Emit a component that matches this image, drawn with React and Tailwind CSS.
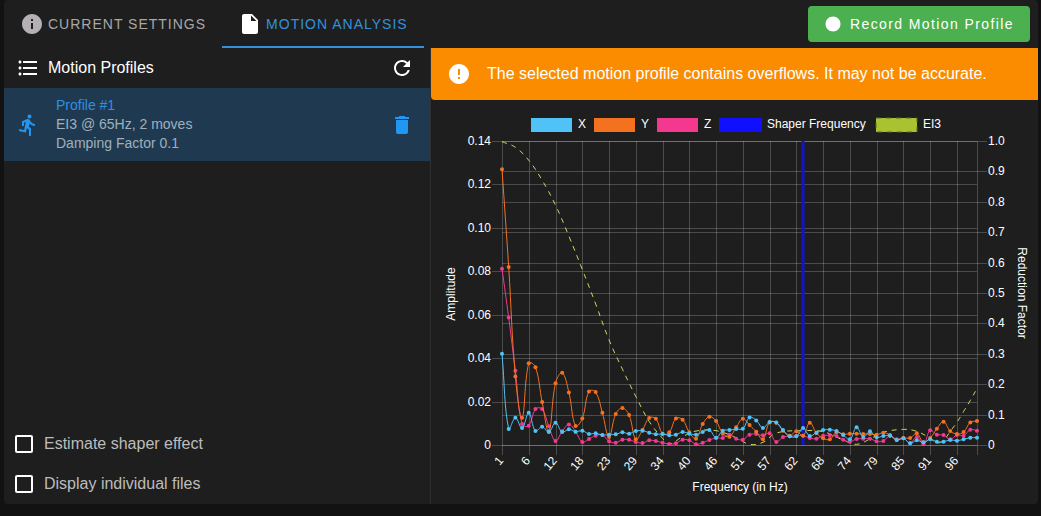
import { useState } from "react";
import { MdInfo, MdInsertDriveFile, MdFormatListBulleted, MdRefresh, MdDirectionsRun, MdDelete, MdError, MdCircle } from "react-icons/md";

// plot area inside the chart's viewBox
const PLOT = { left: 71, top: 41, width: 475, height: 304 };
const RIGHT = PLOT.left + PLOT.width;
const BOTTOM = PLOT.top + PLOT.height;
const FULL_SCALE = 914;   // raw samples at an amplitude of 0.14
const LAST = 71;

const SERIES = [
  { name:"X", color:"#4fc3f7", data:[274,48,82,51,97,42,55,39,67,39,47,40,43,33,35,30,31,32,38,34,42,43,37,32,33,29,31,39,34,31,39,45,22,43,45,48,49,83,74,51,69,68,45,26,26,51,27,37,45,46,42,30,17,53,24,41,23,27,28,15,20,5,14,8,17,10,10,15,13,17,22,22] },
  { name:"Y", color:"#f4711f", data:[829,535,206,82,246,234,129,41,186,217,158,57,80,161,159,97,24,93,111,90,17,45,81,79,34,38,80,76,38,19,63,85,72,34,25,53,79,60,40,17,68,67,43,28,41,28,67,36,20,17,38,32,34,34,33,33,31,37,30,15,21,21,35,8,21,49,70,42,33,39,68,72] },
  { name:"Z", color:"#f5388f", data:[530,383,223,63,58,108,108,56,12,41,62,40,9,18,28,30,11,7,16,16,9,6,14,12,7,3,5,16,14,2,7,15,21,21,31,19,16,31,33,29,35,9,24,26,28,28,21,19,28,29,27,16,10,18,19,19,11,12,28,17,20,6,24,2,44,31,30,17,30,28,46,43] },
];

const EI3 = [[0,912],[2,895],[4,856],[6,796],[8,721],[10,628],[12,528],[14,424],[16,316],[18,228],[20,146],[22,71],[24,20],[25,3],[27,25],[29,42],[32,43],[35,22],[37,2],[39,8],[41,36],[45,43],[48,40],[51,15],[53,2],[55,18],[57,38],[60,47],[62,41],[64,20],[65,6],[66,14],[67,41],[68,68],[69,101],[70,134],[71,170]];

const X_LABELS = [1,6,12,18,23,29,34,40,46,51,57,62,68,74,79,85,91,96];
const AMPLITUDE = ["0","0.02","0.04","0.06","0.08","0.10","0.12","0.14"];
const REDUCTION = ["0","0.1","0.2","0.3","0.4","0.5","0.6","0.7","0.8","0.9","1.0"];

const LEGEND = [
  { name:"X", color:"#4fc3f7", x:100, text:147 },
  { name:"Y", color:"#f4711f", x:163, text:210 },
  { name:"Z", color:"#f5388f", x:226, text:273 },
  { name:"Shaper Frequency", color:"#1010ff", x:288, text:336 },
  { name:"EI3", color:"#a9c22f", x:445, text:492 },
];

const px = i => PLOT.left + (i / LAST) * PLOT.width;
const py = v => BOTTOM - (v / FULL_SCALE) * PLOT.height;
const clampY = y => Math.min(BOTTOM, Math.max(PLOT.top, y));

// bezier curve through the points, tension 0.4
function curve(pts) {
  const ctrl = pts.map((p, i) => {
    const a = pts[i - 1] || p;
    const b = pts[i + 1] || p;
    const da = Math.hypot(p[0] - a[0], p[1] - a[1]);
    const db = Math.hypot(b[0] - p[0], b[1] - p[1]);
    const fa = (0.4 * da) / (da + db);
    const fb = (0.4 * db) / (da + db);
    return {
      prev: [p[0] - fa * (b[0] - a[0]), clampY(p[1] - fa * (b[1] - a[1]))],
      next: [p[0] + fb * (b[0] - a[0]), clampY(p[1] + fb * (b[1] - a[1]))],
    };
  });
  return pts.map((p, i) => (i === 0 ? `M${p}` : `C${ctrl[i - 1].next} ${ctrl[i].prev} ${p}`)).join(" ");
}

function MotionChart() {
  const shaperX = px(45);
  return (
    <svg viewBox="0 0 607 404" className="block w-full h-auto text-[12px]" fill="#fff" role="img" aria-label="Motion profile chart">
      {/* Legend */}
      {LEGEND.map(l => (
        <g key={l.name}>
          <rect x={l.x} y="18" width={l.name === "Shaper Frequency" ? 43 : 41} height="14" fill={l.color} />
          {l.name === "EI3" && <rect x={l.x} y="18" width="41" height="14" fill="none" stroke="#5f6b29" strokeDasharray="5 5" />}
          <text x={l.text} y="28">{l.name}</text>
        </g>
      ))}

      {/* Grid */}
      <g stroke="#fff" strokeOpacity="0.2">
        {X_LABELS.map((l, i) => <path key={l} d={`M${Math.round(px(i * 4)) + 0.5} ${PLOT.top}V${BOTTOM + 10}`} />)}
        <path d={`M${RIGHT + 0.5} ${PLOT.top}V${BOTTOM + 10}`} />
        {AMPLITUDE.map((l, i) => <path key={l} d={`M${PLOT.left - 10} ${Math.round(BOTTOM - (i / 7) * PLOT.height) + 0.5}H${RIGHT}`} />)}
        {REDUCTION.map((l, i) => <path key={l} d={`M${PLOT.left} ${Math.round(BOTTOM - (i / 10) * PLOT.height) + 0.5}H${RIGHT + 10}`} />)}
      </g>

      {/* Axis labels */}
      {AMPLITUDE.map((l, i) => <text key={l} x="60" y={BOTTOM + 4 - (i / 7) * PLOT.height} textAnchor="end">{l}</text>)}
      {REDUCTION.map((l, i) => <text key={l} x="557" y={BOTTOM + 4 - (i / 10) * PLOT.height}>{l}</text>)}
      {X_LABELS.map((l, i) => (
        <text key={l} textAnchor="end" transform={`translate(${px(i * 4) + 2} ${BOTTOM + 16}) rotate(-50)`}>{l}</text>
      ))}
      <text x="309" y="391" textAnchor="middle">Frequency (in Hz)</text>
      <text textAnchor="middle" transform="translate(24 194) rotate(-90)">Amplitude</text>
      <text textAnchor="middle" transform="translate(587 193) rotate(90)">Reduction Factor</text>

      {/* Curves, the first series on top */}
      <path d={curve(EI3.map(([i, v]) => [px(i), py(v)]))} fill="none" stroke="#c8d85c" strokeDasharray="5 5" />
      <path d={`M${shaperX} ${PLOT.top}V${BOTTOM}`} stroke="#1414c8" strokeWidth="3" />
      {[...SERIES].reverse().map(s => (
        <g key={s.name} fill={s.color}>
          <path d={curve(s.data.map((v, i) => [px(i), py(v)]))} fill="none" stroke={s.color} />
          {s.data.map((v, i) => <circle key={i} cx={px(i)} cy={py(v)} r="2" />)}
        </g>
      ))}
    </svg>
  );
}

function Option({ label, checked, onChange }) {
  return (
    <label className="flex items-center gap-[11px] h-10 text-base text-[#bcbcbc] cursor-pointer">
      <input type="checkbox" checked={checked} onChange={onChange}
        className="appearance-none w-[18px] h-[18px] border-2 border-white rounded-xs checked:bg-[#2196f3]" />
      {label}
    </label>
  );
}

export default function App() {
  const [estimate, setEstimate] = useState(false);
  const [individual, setIndividual] = useState(false);

  const tab = "flex items-center gap-1 px-4 h-12 text-sm tracking-[1px] border-b-2";

  return (
    <div className="min-h-screen bg-[#121212] pl-1 pr-[3px] text-white font-['Liberation_Sans',Arial,sans-serif]">
      <div className="bg-[#1e1e1e] rounded">

        {/* Tabs */}
        <header className="flex items-center h-12">
          <nav className="flex">
            <button className={`${tab} pt-px text-[#a8a8a8] border-transparent`}>
              <MdInfo className="w-6 h-6 text-[#b5b0b3]" />CURRENT SETTINGS
            </button>
            <button className={`${tab} pt-px text-[#3391dd] border-[#3391dd]`}>
              <MdInsertDriveFile className="w-6 h-6 text-white" />MOTION ANALYSIS
            </button>
          </nav>
          <button className="flex items-center gap-2 ml-auto mr-2 px-4 h-9 rounded bg-[#4caf50] text-sm tracking-widest">
            <MdCircle className="w-[18px] h-[18px]" />Record Motion Profile
          </button>
        </header>

        <div className="flex">
          {/* Profile list */}
          <section className="flex flex-col shrink-0 w-[427px] border-r border-[#2f2f2f]">
            <div className="flex items-center h-10 pl-3 pr-4">
              <MdFormatListBulleted className="w-6 h-6 mr-2" />
              <h2 className="text-base">Motion Profiles</h2>
              <button aria-label="Refresh" className="ml-auto"><MdRefresh className="w-6 h-6" /></button>
            </div>
            <div className="flex items-center py-2 pl-3 pr-4 bg-[#1f3a50]">
              <MdDirectionsRun className="w-6 h-6 mr-4 text-[#2196f3]" />
              <div className="text-sm leading-[19px] text-[#9fb0bd]">
                <p className="text-[#2f8fe0]">Profile #1</p>
                <p>EI3 @ 65Hz, 2 moves</p>
                <p>Damping Factor 0.1</p>
              </div>
              <button aria-label="Delete profile" className="ml-auto text-[#2196f3]"><MdDelete className="w-6 h-6" /></button>
            </div>
            <div className="mt-auto pl-[11px]">
              <Option label="Estimate shaper effect" checked={estimate} onChange={() => setEstimate(!estimate)} />
              <Option label="Display individual files" checked={individual} onChange={() => setIndividual(!individual)} />
            </div>
          </section>

          {/* Chart */}
          <section className="flex-1 min-w-0">
            <div role="alert" className="flex items-center gap-4 h-[52px] px-4 bg-[#fb8c00] rounded-bl text-base">
              <MdError className="w-6 h-6" />
              The selected motion profile contains overflows. It may not be accurate.
            </div>
            <MotionChart />
          </section>
        </div>

      </div>
    </div>
  );
}
